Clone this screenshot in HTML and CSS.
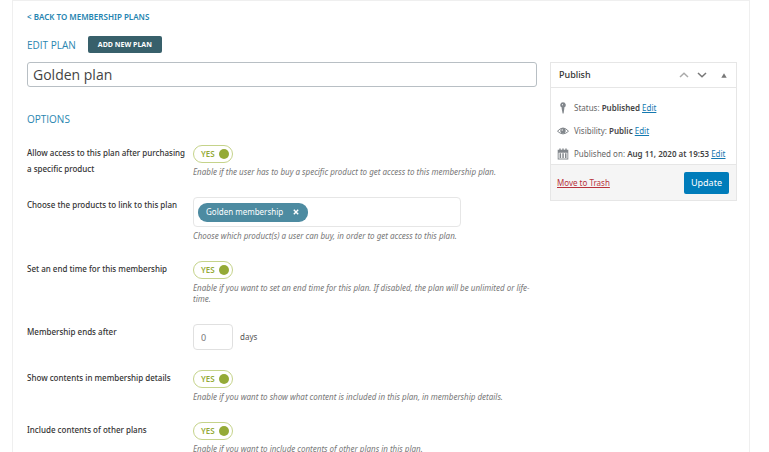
FILE: index.html
```html
<!DOCTYPE html>
<html lang="en">
<head>
<meta charset="utf-8">
<title>Edit plan</title>
<link rel="stylesheet" href="styles.css">
</head>
<body>
<div class="panel">
  <a class="back" href="#">&lt; BACK TO MEMBERSHIP PLANS</a>
  <div class="heading">
    <h1>EDIT PLAN</h1>
    <button class="add" type="button">ADD NEW PLAN</button>
  </div>
  <div class="columns">
    <main>
      <input class="title" type="text" value="Golden plan" aria-label="Plan name">
      <h2>OPTIONS</h2>
      <form class="options">
        <div class="row">
          <label class="name" for="access">Allow access to this plan after purchasing a specific product</label>
          <div class="field">
            <span class="toggle"><input type="checkbox" id="access" checked><span>YES</span><i></i></span>
            <p>Enable if the user has to buy a specific product to get access to this membership plan.</p>
          </div>
        </div>
        <div class="row">
          <label class="name" for="products">Choose the products to link to this plan</label>
          <div class="field">
            <div class="tags">
              <span class="tag">Golden membership
                <button type="button" aria-label="Remove"><svg viewBox="0 0 6 6"><path d="M.8.8 5.2 5.2M5.2.8.8 5.2"/></svg></button>
              </span>
              <input type="text" id="products">
            </div>
            <p>Choose which product(s) a user can buy, in order to get access to this plan.</p>
          </div>
        </div>
        <div class="row">
          <label class="name" for="ending">Set an end time for this membership</label>
          <div class="field">
            <span class="toggle"><input type="checkbox" id="ending" checked><span>YES</span><i></i></span>
            <p>Enable if you want to set an end time for this plan. If disabled, the plan will be unlimited or life-time.</p>
          </div>
        </div>
        <div class="row">
          <label class="name" for="days">Membership ends after</label>
          <div class="field duration">
            <input type="text" id="days" value="0"><span>days</span>
          </div>
        </div>
        <div class="row">
          <label class="name" for="contents">Show contents in membership details</label>
          <div class="field">
            <span class="toggle"><input type="checkbox" id="contents" checked><span>YES</span><i></i></span>
            <p>Enable if you want to show what content is included in this plan, in membership details.</p>
          </div>
        </div>
        <div class="row">
          <label class="name" for="others">Include contents of other plans</label>
          <div class="field">
            <span class="toggle"><input type="checkbox" id="others" checked><span>YES</span><i></i></span>
            <p>Enable if you want to include contents of other plans in this plan.</p>
          </div>
        </div>
      </form>
    </main>
    <aside class="publish">
      <header>
        <h3>Publish</h3>
        <button type="button" aria-label="Move up"><svg class="up" viewBox="0 0 10 6"><path d="M1 5 5 1.2 9 5"/></svg></button>
        <button type="button" aria-label="Move down"><svg class="down" viewBox="0 0 10 6"><path d="M1 1 5 4.8 9 1"/></svg></button>
        <button type="button" aria-label="Collapse"><svg class="fold" viewBox="0 0 6 5"><path d="M3 .3 5.7 4.7H.3Z"/></svg></button>
      </header>
      <ul>
        <li><svg viewBox="0 0 12 12"><path d="M6 .3a2.8 2.8 0 0 1 1.3 5.3v1.2L6.6 11.6H5.6L4.7 6.8V5.6A2.8 2.8 0 0 1 6 .3Z"/><path class="cut" d="M5 2.2h1v1h-1z"/></svg><span>Status: <b>Published</b> <a href="#">Edit</a></span></li>
        <li><svg viewBox="0 0 12 12"><path class="line" d="M.5 6.2Q6 -.2 11.5 6.2 6 11.6.5 6.2Z"/><circle cx="6" cy="5.8" r="2.7"/><circle class="cut" cx="5.2" cy="5" r=".7"/></svg><span>Visibility: <b>Public</b> <a href="#">Edit</a></span></li>
        <li><svg viewBox="0 0 12 12"><path fill-rule="evenodd" d="M.7 1.8h1.6V.4h1.4v1.4h1.6V.4h1.4v1.4h1.6V.4h1.4v1.4h1.6v9.6H.7ZM1.6 4.7v5.8h8.8V4.7Z"/><path d="M2.6 5.3h1.5v4.6H2.6zM5.3 5.3h1.5v4.6H5.3zM8 5.3h1.5v4.6H8z"/></svg><span>Published on: <b>Aug 11, 2020 at 19:53</b> <a href="#">Edit</a></span></li>
      </ul>
      <footer>
        <a class="trash" href="#">Move to Trash</a>
        <button class="update" type="button">Update</button>
      </footer>
    </aside>
  </div>
</div>
</body>
</html>
```
FILE: styles.css
```css
* { box-sizing: border-box; }
html { scrollbar-width: none; }
body {
  margin: 0;
  background: #fff;
  color: #555;
  font: 8px/16px "Noto Sans", "Open Sans", sans-serif;
}
h1, h2, h3, p, ul { margin: 0; padding: 0; }
button, input { font: inherit; color: inherit; }
button { padding: 0; border: 0; background: none; cursor: pointer; }
svg { display: block; }

.panel {
  min-height: 100vh;
  margin: 0 19px 0 12px;
  padding: 8px 12px 20px 14px;
  border: solid #efefef;
  border-width: 1px 1px 0;
}
.back { display: block; color: #2484b0; font-weight: 600; text-decoration: none; }
.heading { display: flex; align-items: center; gap: 12px; margin: 11px 0 9px; }
h1, h2 { color: #2a86b0; font-family: "Open Sans", sans-serif; font-size: 10px; font-weight: 400; line-height: 16px; }
.add {
  height: 17px;
  padding: 0 10px;
  border-radius: 2px;
  background: #38606b;
  color: #fff;
  font-family: "Open Sans", sans-serif;
  font-size: 7px;
  font-weight: 700;
}
.columns { display: flex; align-items: flex-start; gap: 13px; }
main { flex: 1; min-width: 0; }
.title {
  display: block;
  width: 100%;
  height: 25px;
  padding: 0 5px;
  border: 1px solid #b8bfc4;
  border-radius: 3px;
  background: #fff;
  color: #444;
  font-family: "Open Sans", sans-serif;
  font-size: 14px;
}
h2 { margin: 24px 0 18px; }

.options { display: grid; gap: 20px; }
.row { display: grid; grid-template-columns: 162px 1fr; gap: 4px; }
.name { color: #333; font-weight: 500; }
.field p { margin-top: 3px; color: #777; font-style: italic; line-height: 11px; }
.toggle {
  position: relative;
  display: flex;
  align-items: center;
  justify-content: space-between;
  width: 40px;
  height: 18px;
  padding: 0 3px 0 7px;
  border: 1px solid #c5d38a;
  border-radius: 9px;
  color: #94aa36;
  font-weight: 600;
}
.toggle input { position: absolute; inset: 0; width: 100%; height: 100%; margin: 0; opacity: 0; }
.toggle i { width: 10px; height: 10px; border-radius: 50%; background: #94aa36; }
.tags {
  display: flex;
  align-items: center;
  width: 78%;
  height: 30px;
  padding: 0 4px;
  border: 1px solid #e6e6e6;
  border-radius: 4px;
}
.tags input { flex: 1; min-width: 0; border: 0; outline: 0; background: none; }
.tag {
  display: flex;
  align-items: center;
  gap: 10px;
  height: 19px;
  padding: 0 9px 0 8px;
  border-radius: 9px;
  background: #4d8ba1;
  color: #fff;
  white-space: nowrap;
}
.tag svg { width: 6px; height: 6px; fill: none; stroke: #fff; stroke-width: 1.4; }
.duration { display: flex; align-items: center; gap: 7px; }
.duration input {
  width: 40px;
  height: 26px;
  padding: 0 7px;
  border: 1px solid #e0e0e0;
  border-radius: 4px;
  color: #777;
  font-size: 9px;
}

.publish { width: 187px; border: 1px solid #e6e6e6; color: #666; }
.publish header {
  display: flex;
  align-items: center;
  gap: 8px;
  height: 25px;
  padding: 0 9px 0 8px;
  border-bottom: 1px solid #e6e6e6;
}
h3 { flex: 1; color: #333; font-size: 9px; font-weight: 500; }
.up, .down { width: 10px; height: 6px; fill: none; stroke: #aaa; stroke-width: 1.5; }
.down { stroke: #777; }
.fold { width: 6px; height: 5px; margin-left: 6px; fill: #777; }
.publish ul { display: grid; gap: 7px; padding: 12px 6px 2px 6px; list-style: none; }
.publish li { display: flex; align-items: center; gap: 5px; white-space: nowrap; }
.publish li svg { width: 12px; height: 12px; fill: #82878c; }
.publish li .line { fill: none; stroke: #82878c; }
.publish li .cut { fill: #fff; }
.publish b { color: #444; font-weight: 600; }
.publish a { color: #1479b0; }
.publish footer {
  display: flex;
  align-items: center;
  justify-content: space-between;
  height: 36px;
  padding: 0 7px 0 6px;
  border-top: 1px solid #e6e6e6;
  background: #f5f5f5;
}
.publish .trash { color: #b8323c; }
.update { height: 22px; padding: 0 7px; border-radius: 2px; background: #007cba; color: #fff; font-size: 9px; }
```
